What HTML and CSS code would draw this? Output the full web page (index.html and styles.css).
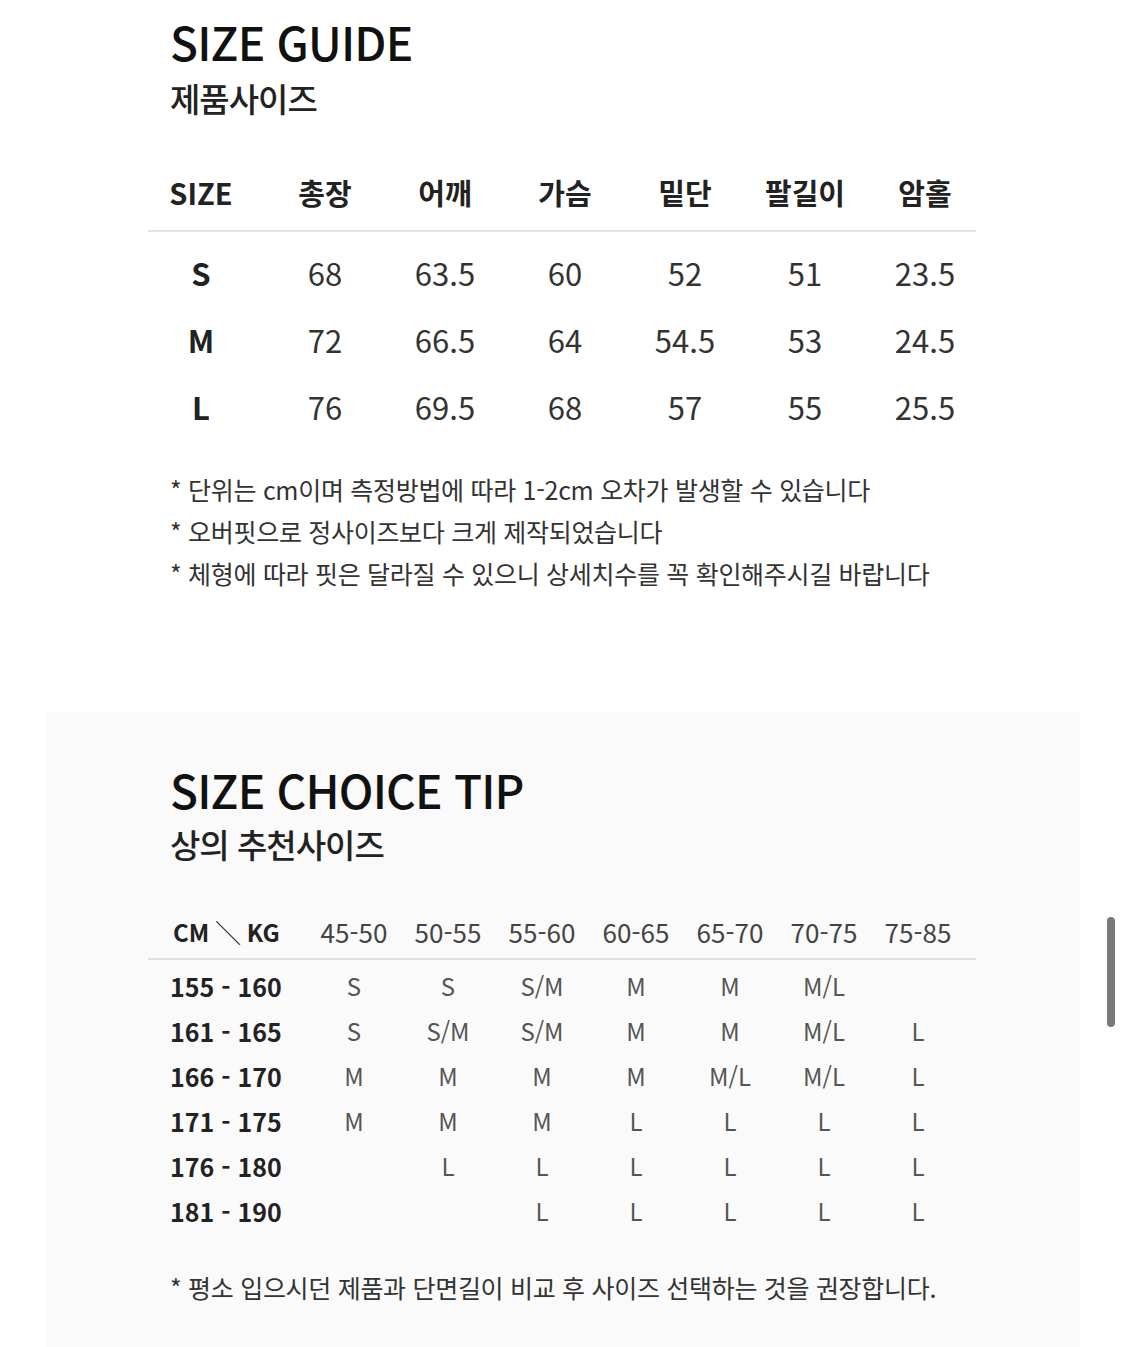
FILE: index.html
```html
<!DOCTYPE html>
<html lang="ko">
<head>
<meta charset="utf-8">
<link rel="stylesheet" href="styles.css">
</head>
<body>
<section class="guide">
  <h1 class="title">SIZE GUIDE</h1>
  <h2 class="subtitle">제품사이즈</h2>
  <div class="spec">
    <div class="spec-row spec-head">
      <span>SIZE</span><span>총장</span><span>어깨</span><span>가슴</span><span>밑단</span><span>팔길이</span><span>암홀</span>
    </div>
    <div class="spec-body">
      <div class="spec-row"><span class="sz">S</span><span>68</span><span>63.5</span><span>60</span><span>52</span><span>51</span><span>23.5</span></div>
      <div class="spec-row"><span class="sz">M</span><span>72</span><span>66.5</span><span>64</span><span>54.5</span><span>53</span><span>24.5</span></div>
      <div class="spec-row"><span class="sz">L</span><span>76</span><span>69.5</span><span>68</span><span>57</span><span>55</span><span>25.5</span></div>
    </div>
  </div>
  <ul class="notes">
    <li>* 단위는 cm이며 측정방법에 따라 1-2cm 오차가 발생할 수 있습니다</li>
    <li>* 오버핏으로 정사이즈보다 크게 제작되었습니다</li>
    <li>* 체형에 따라 핏은 달라질 수 있으니 상세치수를 꼭 확인해주시길 바랍니다</li>
  </ul>
</section>
<section class="tip">
  <div class="tip-inner">
    <h1 class="title">SIZE CHOICE TIP</h1>
    <h2 class="subtitle">상의 추천사이즈</h2>
    <div class="rec">
      <div class="rec-row rec-head">
        <span class="lbl">CM ╲ KG</span><span>45-50</span><span>50-55</span><span>55-60</span><span>60-65</span><span>65-70</span><span>70-75</span><span>75-85</span>
      </div>
      <div class="rec-body">
        <div class="rec-row"><span class="lbl">155 - 160</span><span>S</span><span>S</span><span>S/M</span><span>M</span><span>M</span><span>M/L</span><span></span></div>
        <div class="rec-row"><span class="lbl">161 - 165</span><span>S</span><span>S/M</span><span>S/M</span><span>M</span><span>M</span><span>M/L</span><span>L</span></div>
        <div class="rec-row"><span class="lbl">166 - 170</span><span>M</span><span>M</span><span>M</span><span>M</span><span>M/L</span><span>M/L</span><span>L</span></div>
        <div class="rec-row"><span class="lbl">171 - 175</span><span>M</span><span>M</span><span>M</span><span>L</span><span>L</span><span>L</span><span>L</span></div>
        <div class="rec-row"><span class="lbl">176 - 180</span><span></span><span>L</span><span>L</span><span>L</span><span>L</span><span>L</span><span>L</span></div>
        <div class="rec-row"><span class="lbl">181 - 190</span><span></span><span></span><span>L</span><span>L</span><span>L</span><span>L</span><span>L</span></div>
      </div>
    </div>
    <p class="tip-note">* 평소 입으시던 제품과 단면길이 비교 후 사이즈 선택하는 것을 권장합니다.</p>
  </div>
</section>
<div class="scrollbar"></div>
</body>
</html>
```
FILE: styles.css
```css
* { box-sizing: border-box; }
html, body { margin: 0; padding: 0; background: #fff; }
body {
  font-family: "Noto Sans CJK KR", "Noto Sans", sans-serif;
  color: #222;
  width: 1125px;
  height: 1347px;
  overflow: hidden;
  position: relative;
}
.title {
  margin: 0;
  font-size: 46px;
  font-weight: 500;
  line-height: 50px;
  color: #111;
  letter-spacing: -0.8px;
}
.subtitle {
  margin: 12px 0 0;
  font-size: 33px;
  font-weight: 500;
  line-height: 40px;
  color: #222;
  letter-spacing: -1px;
}
.guide {
  padding: 16px 0 0 170px;
}
.spec {
  margin: 38px 0 0 -22px;
  width: 828px;
}
.spec-row {
  display: grid;
  grid-template-columns: 117px repeat(6, 120px);
  align-items: center;
}
.spec-row span { text-align: center; }
.spec-row span:first-child { padding-right: 11px; }
.spec-head {
  height: 76px;
  border-bottom: 2px solid #e2e2e2;
  font-size: 29px;
  font-weight: 700;
  color: #222;
  padding-bottom: 2px;
}
.spec-body { padding-top: 7px; }
.spec-body .spec-row {
  height: 67px;
  font-size: 31px;
  color: #333;
  font-weight: 400;
}
.spec-body .sz { font-weight: 700; color: #222; }
.notes {
  list-style: none;
  margin: 28px 0 0;
  padding: 0;
  font-size: 25px;
  color: #333;
  letter-spacing: -0.3px;
}
.notes li { line-height: 42px; }
.tip {
  margin: 118px 45px 0;
  background: #fafafa;
  height: 640px;
}
.tip-inner {
  padding: 52px 0 0 125px;
}
.tip .subtitle { margin-top: 10px; }
.rec {
  margin: 42px 0 0 -22px;
  width: 828px;
}
.rec-row {
  display: grid;
  grid-template-columns: 159px repeat(7, 94px);
  align-items: center;
}
.rec-row span { text-align: center; }
.rec-row .lbl {
  text-align: left;
  padding-left: 22px;
  font-weight: 700;
  color: #222;
  font-size: 25px;
}
.rec-head {
  height: 54px;
  border-bottom: 2px solid #e2e2e2;
  font-size: 26px;
  color: #444;
  padding-bottom: 2px;
}
.rec-head .lbl { padding-left: 25px; font-size: 24px; }
.rec-body { padding-top: 3px; }
.rec-body .rec-row {
  height: 45px;
  font-size: 24px;
  color: #555;
}
.tip-note {
  margin: 36px 0 0;
  font-size: 25px;
  color: #333;
  letter-spacing: -0.3px;
}
.scrollbar {
  position: absolute;
  left: 1107px;
  top: 917px;
  width: 8px;
  height: 110px;
  border-radius: 4px;
  background: #7a7a7a;
}
```
